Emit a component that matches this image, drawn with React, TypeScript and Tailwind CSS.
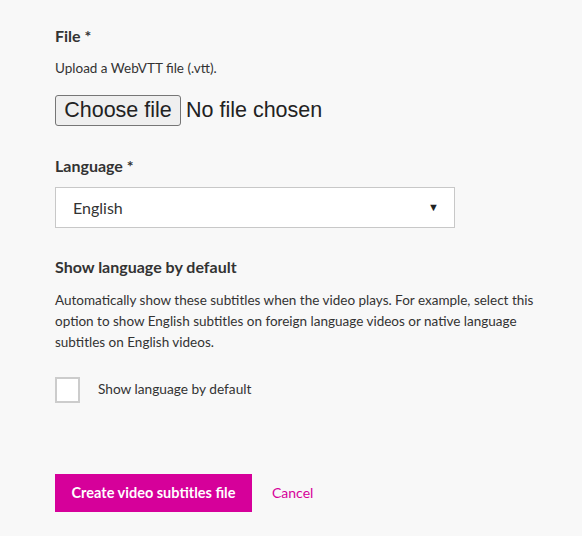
import React from "react";

export default function App() {
  return (
    <div className="min-h-[536px] w-full bg-[#f8f8f8] font-['Lato',sans-serif] text-[#333]">
      <div className="px-[55px] pt-[26px]">
        <div className="text-[16px] font-bold leading-[20px]">File *</div>
        <div className="mt-[13px] text-[13.5px] leading-[18px]">Upload a WebVTT file (.vtt).</div>
        <div className="mt-[18px] flex items-center font-['Liberation_Sans',sans-serif] text-[21.5px] text-[#222]">
          <span className="flex h-[31px] w-[126px] items-center justify-center rounded-[3px] border border-[#767676] bg-[#efefef] pt-[1px] leading-none">
            Choose file
          </span>
          <span className="ml-[5px] pt-[1px] leading-none">No file chosen</span>
        </div>

        <div className="mt-[30px] text-[16px] font-bold leading-[20px]">Language *</div>
        <div className="mt-[11px] flex h-[41px] w-[400px] items-center justify-between border border-[#c8c8c8] bg-white pl-[17px] pr-[15px]">
          <span className="text-[16px]">English</span>
          <span className="text-[11px] text-[#222]">▼</span>
        </div>

        <div className="mt-[29px] text-[16px] font-bold leading-[20px]">Show language by default</div>
        <p className="mt-[13px] w-[490px] text-[13.5px] leading-[21px]">
          Automatically show these subtitles when the video plays. For example, select this option to show English subtitles on foreign language videos or native language subtitles on English videos.
        </p>
        <div className="mt-[24px] flex items-center">
          <span className="h-[26px] w-[25px] border-2 border-[#cccccc] bg-white" />
          <span className="ml-[18px] -mt-[2px] text-[13.7px]">Show language by default</span>
        </div>

        <div className="mt-[71px] flex items-center">
          <button className="h-[38px] w-[197px] bg-[#d6009a] text-[14.5px] font-bold text-white">
            Create video subtitles file
          </button>
          <span className="ml-[20px] -mt-[1px] text-[14px] text-[#d6009a]">Cancel</span>
        </div>
      </div>
    </div>
  );
}
